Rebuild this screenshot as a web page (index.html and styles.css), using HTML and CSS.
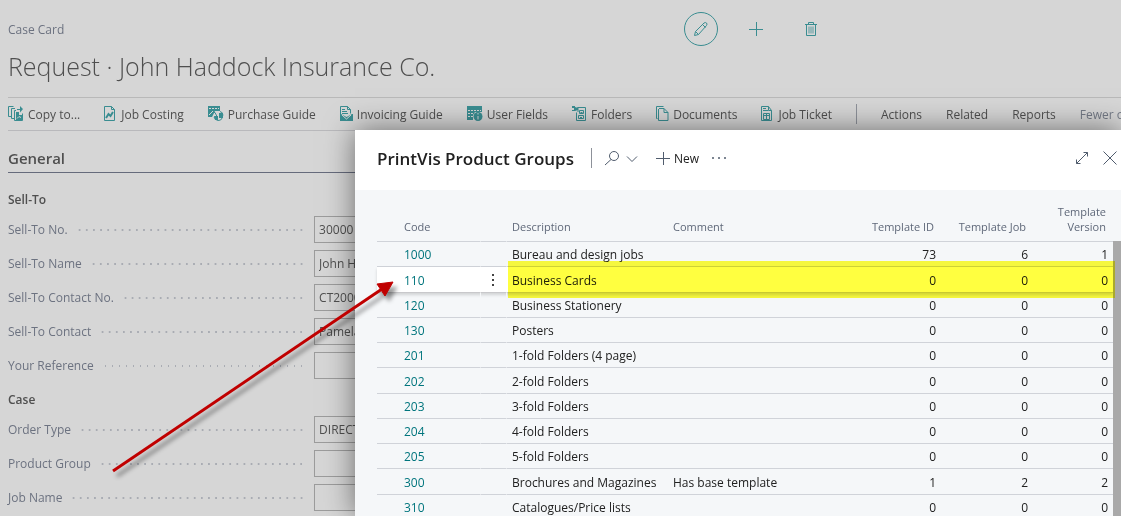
FILE: index.html
```html
<!DOCTYPE html>
<html lang="en">
<head>
  <meta charset="UTF-8" />
  <meta name="viewport" content="width=device-width, initial-scale=1.0"/>
  <title>Case Card</title>
  <link rel="stylesheet" href="styles.css">
</head>
<body>
  <div class="page">
    <header class="page-header">
      <div class="caption-row">
        <span class="caption">Case Card</span>
        <div class="page-actions">
          <button class="round" aria-label="Edit">
            <svg width="16" height="16" viewBox="0 0 16 16"><path d="M1.500 14.500l1-4L11 2q1.500-1 2.500 0t0 2.500L5.500 13.500zM2.500 10.500l3 3M9.500 3.500l3 3"/></svg>
          </button>
          <button class="add" aria-label="New">
            <svg width="16" height="16" viewBox="0 0 16 16"><path d="M1 8.500h14M8.500 1v14"/></svg>
          </button>
          <button aria-label="Delete">
            <svg width="16" height="16" viewBox="0 0 16 16"><path d="M2 3.500h12M3.500 3.500v11h9v-11M5.500 3V1.500h5V3"/><path class="thin" d="M6 5.500v7M8 5.500v7M10 5.500v7"/></svg>
          </button>
        </div>
      </div>
      <h1>Request · John Haddock Insurance Co.</h1>
    </header>

    <nav class="toolbar">
      <button class="tool">
        <svg width="16" height="16" viewBox="0 0 16 16"><path d="M3 10.500H.5v-10h5M7 2.500H3.500v10h3M8 4.500h-1.500v10h8v-7"/><path class="fill" d="M8 6h3v3h3v5H8zM9 3h3V0l3 3-3 3.500V4H9z"/><path class="cut" d="M9 12.500l2-2 2 1"/></svg>
        Copy to...
      </button>
      <button class="tool">
        <svg width="13" height="16" viewBox="0 0 13 16"><path d="M.5.5h7l3 3v11H.5zM7.500.5v3h3"/><path class="bold" d="M2 12l2.500-4 2 2L9 6"/></svg>
        Job Costing
      </button>
      <button class="tool">
        <svg width="16" height="16" viewBox="0 0 16 16"><path class="fill" d="M0 0h12v5H7l-3 6H0z"/><path class="cut" d="M1 2.500h10" stroke-dasharray="2 1"/><path class="cut" d="M1 9l4-4"/><path d="M5 6.500h2l2 4M6 11q1 3 4 3.500t4.500-3M12 5.500q3 .5 3 4"/><path class="fill" d="M6 10h4v4H7zM11 7h4v5h-4z"/></svg>
        Purchase Guide
      </button>
      <button class="tool">
        <svg width="13" height="16" viewBox="0 0 13 16"><path d="M.5.5h7l3 3v4M.5.5v14M7.500.5v3h3M2 5.500h5M2 7.500h6M2 3.500h3"/><path class="fill" d="M0 8h1l5.500 3L12 8h1v7H0z"/><path class="cut" d="M2 9l4.500 4L11 9"/></svg>
        Invoicing Guide
      </button>
      <button class="tool">
        <svg width="16" height="16" viewBox="0 0 16 16"><path class="fill" d="M0 0h15v6H8l-2 3v5H0z"/><path class="cut" d="M1 4.500h13M1 7.500h6M1 10.500h5" stroke-dasharray="2 1"/><circle class="fill" cx="11" cy="10.500" r="4.500"/><path class="cut" d="M11 7v1.500M11 10v3.500"/></svg>
        User Fields
      </button>
      <button class="tool">
        <svg width="15" height="16" viewBox="0 0 15 16"><path class="fill" d="M0 0h3v1l3 1v2L3 5H0V4h2V2H0z"/><path d="M5.500 1.500h8v13h-9v-8M7.500 4.500h4v3h-4zM6.500 9.500h5v3h-5zM8.500 6.500h2M8 11.500h2M6 1v5"/></svg>
        Folders
      </button>
      <button class="tool">
        <svg width="13" height="16" viewBox="0 0 13 16"><path d="M1.500 12.500h-1V.5h7M3 2.500h5l4 4v8H2.500V3M8 2.500v4h4"/></svg>
        Documents
      </button>
      <button class="tool">
        <svg width="13" height="16" viewBox="0 0 13 16"><path d="M.5.5h7l3 4v10H.5zM7.500.5v4h3M2 2.500h3M2 4.500h5M2.500 7.500h6v6h-6zM5.500 7v7M2.500 9.500h6"/></svg>
        Job Ticket
      </button>
      <span class="divider"></span>
      <button class="tool">Actions</button>
      <button class="tool">Related</button>
      <button class="tool">Reports</button>
      <button class="tool muted">Fewer options</button>
    </nav>

    <main>
      <h2>General</h2>
      <form class="fields">
        <h3>Sell-To</h3>
        <div class="field"><label for="no">Sell-To No.</label><span class="dots"></span><input id="no" type="text" value="30000"></div>
        <div class="field"><label for="name">Sell-To Name</label><span class="dots"></span><input id="name" type="text" value="John Haddock Insurance Co."></div>
        <div class="field"><label for="contact-no">Sell-To Contact No.</label><span class="dots"></span><input id="contact-no" type="text" value="CT200001"></div>
        <div class="field"><label for="contact">Sell-To Contact</label><span class="dots"></span><input id="contact" type="text" value="Pamela"></div>
        <div class="field"><label for="reference">Your Reference</label><span class="dots"></span><input id="reference" type="text"></div>
        <h3>Case</h3>
        <div class="field"><label for="order-type">Order Type</label><span class="dots"></span><input id="order-type" type="text" value="DIRECT"></div>
        <div class="field"><label for="group">Product Group</label><span class="dots"></span><input id="group" type="text"></div>
        <div class="field"><label for="job-name">Job Name</label><span class="dots"></span><input id="job-name" type="text"></div>
      </form>
    </main>
  </div>

  <section class="dialog">
    <header class="dialog-header">
      <h2>PrintVis Product Groups</h2>
      <span class="divider"></span>
      <button class="search" aria-label="Search">
        <svg width="16" height="16" viewBox="0 0 16 16"><circle cx="10" cy="6" r="4.500"/><path d="M7 9.500L1 15"/></svg>
        <svg width="12" height="16" viewBox="0 0 12 16"><path d="M1 6.500l5 5 5-5"/></svg>
      </button>
      <button class="new">
        <svg width="14" height="14" viewBox="0 0 14 14"><path d="M0 7.500h14M7.500 1v13"/></svg>
        New
      </button>
      <button aria-label="More">
        <svg class="more" width="16" height="16" viewBox="0 0 16 16"><circle cx="2" cy="8" r="1"/><circle cx="8" cy="8" r="1"/><circle cx="14" cy="8" r="1"/></svg>
      </button>
      <div class="window-buttons">
        <button aria-label="Expand">
          <svg width="14" height="14" viewBox="0 0 14 14"><path d="M1.500 12.500l11-11M8.500 1.500h4v4M1.500 8.500v4h4"/></svg>
        </button>
        <button aria-label="Close">
          <svg width="14" height="14" viewBox="0 0 14 14"><path d="M.5.5l13 13M13.500.5l-13 13"/></svg>
        </button>
      </div>
    </header>

    <div class="list">
      <table>
        <colgroup>
          <col class="col-code"><col class="col-menu"><col class="col-description"><col><col class="col-id"><col class="col-job"><col class="col-version">
        </colgroup>
        <thead>
          <tr><th>Code</th><th></th><th>Description</th><th>Comment</th><th class="num">Template ID</th><th class="num">Template Job</th><th class="num">Template Version</th></tr>
        </thead>
        <tbody>
          <tr><td><a href="#">1000</a></td><td></td><td>Bureau and design jobs</td><td></td><td class="num">73</td><td class="num">6</td><td class="num">1</td></tr>
          <tr class="selected">
            <td><a href="#">110</a></td>
            <td><button class="row-menu" aria-label="Show more options"><svg width="3" height="13" viewBox="0 0 3 13"><path d="M0 0h2v2H0zM0 5h2v2H0zM0 10h2v2H0z"/></svg></button></td>
            <td>Business Cards</td><td></td><td class="num">0</td><td class="num">0</td><td class="num">0</td>
          </tr>
          <tr><td><a href="#">120</a></td><td></td><td>Business Stationery</td><td></td><td class="num">0</td><td class="num">0</td><td class="num">0</td></tr>
          <tr><td><a href="#">130</a></td><td></td><td>Posters</td><td></td><td class="num">0</td><td class="num">0</td><td class="num">0</td></tr>
          <tr><td><a href="#">201</a></td><td></td><td>1-fold Folders (4 page)</td><td></td><td class="num">0</td><td class="num">0</td><td class="num">0</td></tr>
          <tr><td><a href="#">202</a></td><td></td><td>2-fold Folders</td><td></td><td class="num">0</td><td class="num">0</td><td class="num">0</td></tr>
          <tr><td><a href="#">203</a></td><td></td><td>3-fold Folders</td><td></td><td class="num">0</td><td class="num">0</td><td class="num">0</td></tr>
          <tr><td><a href="#">204</a></td><td></td><td>4-fold Folders</td><td></td><td class="num">0</td><td class="num">0</td><td class="num">0</td></tr>
          <tr><td><a href="#">205</a></td><td></td><td>5-fold Folders</td><td></td><td class="num">0</td><td class="num">0</td><td class="num">0</td></tr>
          <tr><td><a href="#">300</a></td><td></td><td>Brochures and Magazines</td><td>Has base template</td><td class="num">1</td><td class="num">2</td><td class="num">2</td></tr>
          <tr><td><a href="#">310</a></td><td></td><td>Catalogues/Price lists</td><td></td><td class="num">0</td><td class="num">0</td><td class="num">0</td></tr>
        </tbody>
      </table>
      <div class="scrollbar"></div>
      <div class="highlight"></div>
    </div>
  </section>

  <svg class="arrow" width="310" height="210" viewBox="0 0 310 210">
    <path d="M13 191L282 9" stroke="#c00000" stroke-width="3"/>
    <path d="M293 2L277 4l8 12z" fill="#c00000" stroke="#c00000"/>
  </svg>
</body>
</html>
```
FILE: styles.css
```css
* {
  box-sizing: border-box;
}

body {
  margin: 0;
  height: 100vh;
  overflow: hidden;
  background-color: #d6d6d6;
  color: #4f4f4f;
  font-family: 'Open Sans', 'Noto Sans', sans-serif;
  font-size: 12px;
}

h1, h2, h3 {
  margin: 0;
  font-weight: normal;
}

button {
  display: flex;
  align-items: center;
  padding: 0;
  border: none;
  background: none;
  color: inherit;
  font: inherit;
  white-space: nowrap;
  cursor: pointer;
}

svg {
  flex: none;
  fill: none;
  stroke: #3a8d91;
}

.divider {
  flex: none;
  width: 1px;
  height: 20px;
  background-color: #8d9199;
}

/* Case card */
.page {
  padding-left: 8px;
}

.page-header {
  padding: 12px 0 11px;
}

.caption-row {
  display: flex;
  align-items: center;
  gap: 8px;
}

.caption {
  flex: 0 0 60%;
  color: #6c7280;
}

.page-actions {
  display: flex;
  align-items: center;
  gap: 30px;
}

.page-actions .round {
  width: 34px;
  height: 34px;
  justify-content: center;
  border: 1px solid #3a8d91;
  border-radius: 50%;
}

.page-actions .add {
  margin-right: 9px;
}

.thin {
  opacity: 0.8;
}

h1 {
  line-height: 40px;
  font-size: 25px;
  font-weight: 300;
}

.toolbar {
  display: flex;
  align-items: center;
  gap: 24px;
  height: 34px;
  overflow: hidden;
  border-top: 1px solid #b9b9b9;
  border-bottom: 1px solid #b9b9bc;
}

.tool {
  gap: 4px;
}

.tool.muted {
  color: #747a86;
}

.fill {
  fill: #3a8d91;
  stroke: none;
}

.cut {
  stroke: #d6d6d6;
}

.bold {
  stroke-width: 2;
}

main h2 {
  padding-top: 13px;
  border-bottom: 1px solid #666b7c;
  line-height: 28px;
  font-size: 15px;
  font-weight: 600;
}

.fields {
  width: 50%;
  padding-top: 13px;
}

.fields h3 {
  height: 30px;
  line-height: 28px;
  font-size: 12px;
  font-weight: 600;
}

.field {
  display: flex;
  align-items: center;
  height: 27px;
  margin-bottom: 7px;
}

.field label {
  color: #6c7280;
}

.dots {
  flex: 1;
  height: 2px;
  margin: 0 9px 0 8px;
  background: radial-gradient(circle, #a9acb3 1px, transparent 1px) right center / 7px 2px space;
}

.field input {
  width: 45%;
  height: 27px;
  padding: 0 4px;
  border: 1px solid #9c9c9c;
  border-radius: 0;
  background: none;
  color: #4f4f4f;
  font: inherit;
}

/* Product groups dialog */
.dialog {
  position: absolute;
  top: 130px;
  left: 355px;
  right: 0;
  bottom: 0;
  overflow: hidden;
  background-color: #f5f7f9;
  box-shadow: 0 0 28px rgba(0, 0, 0, 0.5);
  color: #212121;
}

.dialog-header {
  display: flex;
  align-items: center;
  height: 60px;
  padding: 0 4px 4px 22px;
  background-color: #fff;
}

.dialog-header h2 {
  margin-right: 17px;
  font-size: 17px;
  font-weight: 600;
}

.dialog-header svg {
  stroke: #505c6d;
}

.search {
  gap: 6px;
  margin: 0 18px 0 12px;
}

.new {
  gap: 4px;
  margin-right: 12px;
}

.dialog-header .more {
  fill: #505c6d;
  stroke: none;
}

.window-buttons {
  display: flex;
  gap: 14px;
  margin-left: auto;
}

.list {
  position: relative;
  display: flex;
  align-items: flex-start;
  padding-left: 22px;
}

table {
  flex: 1;
  table-layout: fixed;
  border-spacing: 0;
}

.col-code { width: 104px; }
.col-menu { width: 26px; }
.col-description { width: 161px; }
.col-id { width: 87px; }
.col-job { width: 92px; }
.col-version { width: 80px; }

th {
  height: 52px;
  padding: 0 5px 7px;
  border-bottom: 1px solid #d0d3d9;
  color: #5f6879;
  font-size: 11px;
  font-weight: normal;
  line-height: 15px;
  text-align: left;
  vertical-align: bottom;
}

td {
  height: 25px;
  padding: 1px 5px 0;
  border-bottom: 1px solid #d0d3d9;
  line-height: 23px;
  white-space: nowrap;
}

/* keeps the average row a little over 25px */
tbody tr:nth-child(4n+2) td {
  height: 26px;
}

th:first-child, td:first-child {
  padding-left: 27px;
}

th:nth-child(-n+2), td:nth-child(-n+2) {
  border-right: 1px solid #f5f7f9;
}

.num {
  text-align: right;
}

th.num {
  padding-right: 7px;
}

td a {
  color: #00757d;
  text-decoration: none;
}

.selected {
  box-shadow: 0 2px 3px rgba(0, 0, 0, 0.15);
}

.selected td {
  border-right-color: #fff;
  border-bottom-color: #c8c8cb;
  background-color: #fff;
}

.row-menu {
  margin-left: 6px;
}

.row-menu svg {
  fill: #444;
  stroke: none;
}

.scrollbar {
  width: 8px;
  height: 100vh;
  margin-top: 51px;
  background-color: #a9a9a9;
}

.highlight {
  position: absolute;
  top: 71px;
  left: 153px;
  right: 6px;
  height: 37px;
  background-color: #ffff40;
  mix-blend-mode: multiply;
}

.arrow {
  position: absolute;
  top: 280px;
  left: 100px;
  filter: drop-shadow(4px 5px 2px rgba(0, 0, 0, 0.4));
  pointer-events: none;
}
```
